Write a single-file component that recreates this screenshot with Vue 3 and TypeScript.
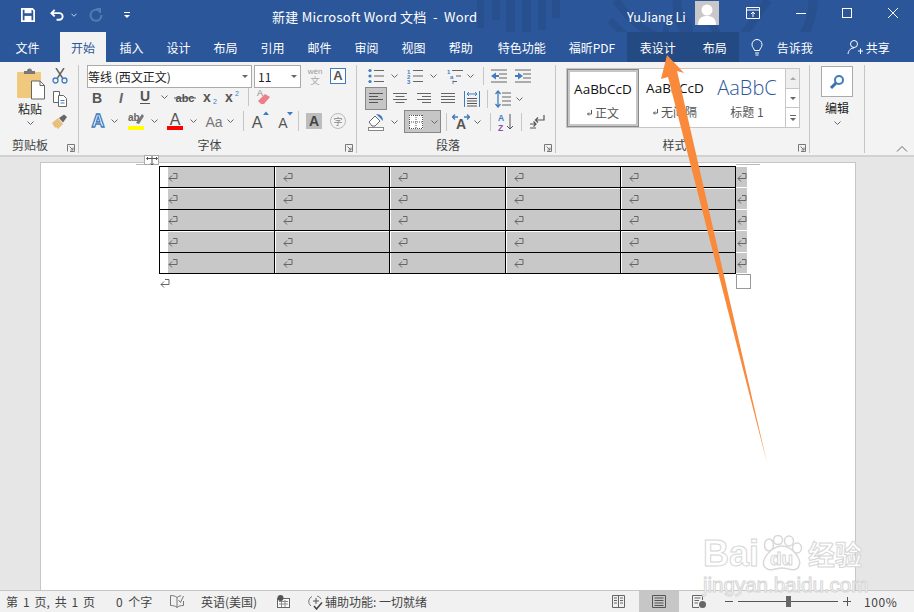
<script setup lang="ts">
const tabs = ['插入', '设计', '布局', '引用', '邮件', '审阅', '视图', '帮助', '特色功能', '福昕PDF']
const rows = [0, 1, 2, 3, 4]
const cols = [0, 1, 2, 3, 4]
</script>

<template>
  <div class="app">
    <svg width="0" height="0" class="defs">
      <symbol id="mark" viewBox="0 0 10 10">
        <path d="M5 1.500H9V6.500H1M4 3.500L1 6.500L4 9.500" fill="none" stroke="#666" stroke-width="1" />
      </symbol>
      <symbol id="caret" viewBox="0 0 7 4">
        <path d="M0.500 0.500L3.500 3.500L6.500 0.500" fill="none" stroke="#666" stroke-width="1" />
      </symbol>
    </svg>

    <header class="titlebar">
      <svg class="pattern" width="460" height="62" viewBox="454 0 460 62">
        <g fill="#28508f">
          <rect x="477" y="0" width="7" height="28" />
          <rect x="492" y="0" width="8" height="20" />
          <rect x="506" y="0" width="9" height="32" />
          <rect x="522" y="0" width="9" height="34" />
          <rect x="538" y="0" width="8" height="30" />
          <rect x="552" y="0" width="8" height="18" />
        </g>
        <g fill="none" stroke="#28508f">
          <circle cx="678" cy="30" r="12" stroke-width="6" />
          <path d="M616 0C640 40 700 60 740 40L768 0" stroke-width="8" />
          <circle cx="745" cy="0" r="68" stroke-width="9" />
          <path d="M610 20L650 62M700 10L740 62" stroke-width="7" />
        </g>
      </svg>
      <div class="qat">
        <svg class="q-save" width="14" height="14" viewBox="0 0 16 16">
          <path d="M1 1H13L15 3V15H1Z" fill="none" stroke="#fff" stroke-width="2" />
          <rect x="4" y="1" width="8" height="5" fill="#fff" />
          <rect x="4" y="9" width="8" height="6" fill="#fff" />
        </svg>
        <svg class="q-undo" width="15" height="14" viewBox="0 0 16 14">
          <path d="M2 5H10A3.500 3.500 0 0 1 10 12H7M5 1.500L1.500 5L5 8.500" fill="none" stroke="#fff" stroke-width="2" />
        </svg>
        <svg class="q-caret" width="6" height="4" viewBox="0 0 7 4"><path d="M0.500 0.500L3.500 3.500L6.500 0.500" fill="none" stroke="#dfe6f1" /></svg>
        <svg class="q-redo" width="14" height="14" viewBox="0 0 14 14">
          <path d="M10.500 3A5.500 5.500 0 1 0 12.500 7M7.500 1H11V5" fill="none" stroke="#557ab2" stroke-width="2" />
        </svg>
        <svg class="q-more" width="8" height="8" viewBox="0 0 8 8">
          <path d="M1 1.500H7" stroke="#fff" /><path d="M1 4L4 7L7 4Z" fill="#fff" />
        </svg>
      </div>
      <div class="doc-title">新建 Microsoft Word 文档&nbsp; -&nbsp; Word</div>
      <div class="user">YuJiang Li</div>
      <div class="avatar">
        <svg width="24" height="24" viewBox="0 0 24 24">
          <circle cx="12" cy="9" r="5.500" fill="#fff" />
          <path d="M3 24C3 17 7 15 12 15S21 17 21 24Z" fill="#fff" />
        </svg>
      </div>
      <div class="win-btns">
        <svg width="14" height="12" viewBox="0 0 14 12">
          <path d="M0.500 0.500H13.500V11.500H0.500ZM0.500 3H13.500M7 10V5M5 7L7 5L9 7" fill="none" stroke="#fff" />
        </svg>
        <svg width="10" height="10" viewBox="0 0 10 10"><path d="M0 5.500H10" stroke="#fff" /></svg>
        <svg width="10" height="10" viewBox="0 0 10 10"><rect x="0.500" y="0.500" width="9" height="9" fill="none" stroke="#fff" /></svg>
        <svg width="10" height="10" viewBox="0 0 10 10"><path d="M0 0L10 10M10 0L0 10" stroke="#fff" /></svg>
      </div>
    </header>

    <nav class="tabbar">
      <span class="tab file">文件</span>
      <span class="tab active">开始</span>
      <span v-for="t in tabs" :key="t" class="tab">{{ t }}</span>
      <div class="ctx-tabs">
        <span class="tab">表设计</span>
        <span class="tab">布局</span>
      </div>
      <svg class="bulb" width="12" height="17" viewBox="0 0 12 17">
        <path d="M3.500 11.500C3 9 1 8.500 1 5.500A5 5 0 0 1 11 5.500C11 8.500 9 9 8.500 11.500ZM4 14H8M4.500 16H7.500" fill="none" stroke="#fff" />
      </svg>
      <span class="tell">告诉我</span>
      <svg class="share-ic" width="16" height="16" viewBox="0 0 16 16">
        <circle cx="7" cy="5" r="3.500" fill="none" stroke="#fff" />
        <path d="M1 15C1.500 11 4 9 7 9M11 12H16M13.500 9.500V15" fill="none" stroke="#fff" />
      </svg>
      <span class="share">共享</span>
    </nav>

    <section class="ribbon">
      <div class="group g-clip">
        <div class="clip-body">
          <div class="paste">
            <svg width="29" height="32" viewBox="0 0 29 32">
              <rect x="1" y="4" width="24" height="26" rx="1" fill="#f0c97f" />
              <path d="M8 6V3H11A2 2 0 0 1 16 3H19V6Z" fill="#777" />
              <path d="M15.500 13H24L28.500 17.500V31H15.500Z" fill="#fff" stroke="#666" />
              <path d="M24 13V17.500H28.500" fill="none" stroke="#666" />
            </svg>
            <span class="paste-label">粘贴</span>
            <svg class="paste-caret" width="7" height="4"><use href="#caret" /></svg>
          </div>
          <div class="clip-tools">
            <svg width="16" height="16" viewBox="0 0 16 16">
              <path d="M4 0L10.500 10M12 0L5.500 10" stroke="#666" stroke-width="1.500" fill="none" />
              <circle cx="3.500" cy="12.500" r="2.500" fill="none" stroke="#3f7cbf" stroke-width="1.300" />
              <circle cx="12.500" cy="12.500" r="2.500" fill="none" stroke="#3f7cbf" stroke-width="1.300" />
            </svg>
            <svg width="16" height="16" viewBox="0 0 16 16">
              <path d="M1.500 0.500H7.500V11.500H1.500Z" fill="#fff" stroke="#666" />
              <path d="M6.500 4.500H11.500L14.500 7.500V15.500H6.500Z" fill="#fff" stroke="#666" />
              <path d="M8.500 9.500H12.500M8.500 12H12.500" stroke="#3f7cbf" />
            </svg>
            <svg width="16" height="16" viewBox="0 0 16 16">
              <path d="M0 9L6 4L11 10L6 15L4 13L3 14Z" fill="#e8c07c" />
              <path d="M7 4L12 0.500L15 3L11 8.500Z" fill="#666" />
            </svg>
          </div>
        </div>
        <div class="g-label clip-label">剪贴板</div>
        <svg class="launcher" width="8" height="8" viewBox="0 0 8 8"><path d="M0.500 7.500V0.500H7.500V7.500H3M2.500 2.500L6 6M6 3.500V6H3.500" fill="none" stroke="#777" /></svg>
      </div>

      <div class="group g-font">
        <div class="font-top">
          <div class="select font-name"><span>等线 (西文正文)</span><i class="tri"></i></div>
          <div class="select font-size"><span>11</span><i class="tri"></i></div>
          <svg class="wen" width="18" height="23" viewBox="0 0 18 23">
            <text x="9" y="7" text-anchor="middle" font-size="8" fill="#999" font-family="Liberation Sans">wén</text>
            <text x="9" y="17" text-anchor="middle" font-size="9.500" fill="#aaa" font-family="Noto Sans CJK SC">文</text>
          </svg>
          <div class="a-box">A</div>
        </div>
        <div class="fr r-f2">
          <svg width="14" height="16"><text x="7" y="14" class="tx bold" text-anchor="middle">B</text></svg>
          <svg width="14" height="16"><text x="7" y="14" class="tx ital" text-anchor="middle">I</text></svg>
          <svg width="14" height="18"><text x="7" y="13" class="tx bold" text-anchor="middle">U</text><path d="M2 15.500H12" stroke="#555" /></svg>
          <svg width="7" height="4"><use href="#caret" /></svg>
          <svg width="22" height="16"><text x="11" y="13" class="tx bold small" text-anchor="middle">abc</text><path d="M0 9H22" stroke="#555" /></svg>
          <svg width="16" height="18"><text x="1" y="14" class="tx bold">x</text><text x="11" y="16" font-size="7" fill="#3f7cbf" font-family="Liberation Sans">2</text></svg>
          <svg width="16" height="18"><text x="1" y="14" class="tx bold">x</text><text x="11" y="8" font-size="7" fill="#3f7cbf" font-family="Liberation Sans">2</text></svg>
          <i class="sep"></i>
          <svg width="16" height="18" viewBox="0 0 16 18">
            <text x="1" y="8" font-size="9" fill="#888" font-family="Liberation Sans">A</text>
            <path d="M2 13L9 6L14 9L8 16H5Z" fill="#ee7f8a" />
          </svg>
        </div>
        <div class="fr r-f3">
          <svg width="18" height="20"><text x="9" y="16" class="tx outline" text-anchor="middle">A</text></svg>
          <svg width="7" height="4"><use href="#caret" /></svg>
          <svg width="16" height="20" viewBox="0 0 16 20">
            <text x="0" y="10" font-size="10" font-weight="700" fill="#666" font-family="Liberation Sans">ab</text>
            <path d="M8 12L14 3L16 5L11 13Z" fill="#777" /><rect y="15" width="16" height="4" fill="#ff0" />
          </svg>
          <svg width="7" height="4"><use href="#caret" /></svg>
          <svg width="16" height="20"><text x="8" y="14" class="tx big" text-anchor="middle">A</text><rect y="15" width="16" height="4" fill="#f00" /></svg>
          <svg width="7" height="4"><use href="#caret" /></svg>
          <svg width="18" height="18"><text x="9" y="15" class="tx big lite" text-anchor="middle">Aa</text></svg>
          <svg width="7" height="4"><use href="#caret" /></svg>
          <i class="sep tall"></i>
          <svg width="18" height="20"><text x="6" y="17" class="tx big" text-anchor="middle">A</text><path d="M12 4H18L15 0.500Z" fill="#3f7cbf" /></svg>
          <svg width="16" height="20"><text x="6" y="17" class="tx mid" text-anchor="middle">A</text><path d="M10 1H16L13 4.500Z" fill="#3f7cbf" /></svg>
          <i class="sep tall"></i>
          <div class="shade-a">A</div>
          <svg width="16" height="16" viewBox="0 0 16 16">
            <circle cx="8" cy="8" r="7.500" fill="none" stroke="#b9b9b9" />
            <text x="8" y="11.500" text-anchor="middle" font-size="9" fill="#888" font-family="Noto Sans CJK SC">字</text>
          </svg>
        </div>
        <div class="g-label">字体</div>
        <svg class="launcher" width="8" height="8" viewBox="0 0 8 8"><path d="M0.500 7.500V0.500H7.500V7.500H3M2.500 2.500L6 6M6 3.500V6H3.500" fill="none" stroke="#777" /></svg>
      </div>

      <div class="group g-para">
        <div class="fr r-p1">
          <svg width="16" height="16" viewBox="0 0 16 16"><path d="M6 2.500H16M6 8H16M6 13.500H16" stroke="#666" /><circle cx="2" cy="2.500" r="1.600" fill="#3f7cbf" /><circle cx="2" cy="8" r="1.600" fill="#3f7cbf" /><circle cx="2" cy="13.500" r="1.600" fill="#3f7cbf" /></svg>
          <svg width="7" height="4"><use href="#caret" /></svg>
          <svg width="16" height="16" viewBox="0 0 16 16"><path d="M6 2.500H16M6 8H16M6 13.500H16" stroke="#666" /><text x="0" y="5.500" class="num">1</text><text x="0" y="11" class="num">2</text><text x="0" y="16" class="num">3</text></svg>
          <svg width="7" height="4"><use href="#caret" /></svg>
          <svg width="16" height="16" viewBox="0 0 16 16"><path d="M5 2.500H16M9 8H14M6 13.500H10" stroke="#666" /><text x="0" y="5.500" class="num">1</text><text x="3" y="11" class="num">a</text><text x="5" y="16" class="num">i</text></svg>
          <svg width="7" height="4"><use href="#caret" /></svg>
          <i class="sep"></i>
          <svg width="16" height="14" viewBox="0 0 16 14"><path d="M0 1H16M8 5H16M8 9H16M0 13H16" stroke="#666" /><path d="M0 7L5 3.500V10.500Z" fill="#3f7cbf" /><path d="M4 7H8" stroke="#3f7cbf" stroke-width="2" /></svg>
          <svg width="16" height="14" viewBox="0 0 16 14"><path d="M0 1H16M8 5H16M8 9H16M0 13H16" stroke="#666" /><path d="M8 7L3 3.500V10.500Z" fill="#3f7cbf" /><path d="M0 7H4" stroke="#3f7cbf" stroke-width="2" /></svg>
        </div>
        <div class="fr r-p2">
          <div class="on-box"><svg width="14" height="11" viewBox="0 0 14 11"><path d="M0 0.500H14M0 3.500H9M0 6.500H14M0 9.500H9" stroke="#555" /></svg></div>
          <svg width="14" height="11" viewBox="0 0 14 11"><path d="M0 0.500H14M2.500 3.500H11.500M0 6.500H14M2.500 9.500H11.500" stroke="#666" /></svg>
          <svg width="14" height="11" viewBox="0 0 14 11"><path d="M0 0.500H14M5 3.500H14M0 6.500H14M5 9.500H14" stroke="#666" /></svg>
          <svg width="14" height="11" viewBox="0 0 14 11"><path d="M0 0.500H14M0 3.500H14M0 6.500H14M0 9.500H14" stroke="#666" /></svg>
          <svg width="16" height="16" viewBox="0 0 16 16"><path d="M0.500 0V16M15.500 0V16" stroke="#3f7cbf" /><path d="M3 7.500H13M3 10H13M3 12.500H13M3 15H13" stroke="#555" /><path d="M3 3H13M5 1L3 3L5 5M11 1L13 3L11 5" fill="none" stroke="#3f7cbf" /></svg>
          <i class="sep"></i>
          <svg width="16" height="18" viewBox="0 0 16 18"><path d="M7 3H16M7 7H16M7 11H16M7 15H16" stroke="#666" /><path d="M3 1V17M0.500 4L3 1L5.500 4M0.500 14L3 17L5.500 14" fill="none" stroke="#3f7cbf" stroke-width="1.300" /></svg>
          <svg width="7" height="4"><use href="#caret" /></svg>
        </div>
        <div class="fr r-p3">
          <svg width="18" height="18" viewBox="0 0 18 18">
            <path d="M2 9L8 3L13 8L8 13H5Z" fill="#fff" stroke="#666" /><path d="M9 1C14 1 16 4 16 8L12 4Z" fill="#3f7cbf" />
            <rect x="1.500" y="14.500" width="15" height="3" fill="#fff" stroke="#888" />
          </svg>
          <svg width="7" height="4"><use href="#caret" /></svg>
          <div class="on-box wide">
            <svg width="14" height="14" viewBox="0 0 14 14"><rect width="14" height="14" fill="#fff" /><path d="M0.500 0V14M7 0V14M13.500 0V14M0 0.500H14M0 7H14M0 13.500H14" stroke="#555" stroke-dasharray="1 1" /></svg>
            <svg width="7" height="4"><use href="#caret" /></svg>
          </div>
          <i class="sep"></i>
          <svg width="18" height="18" viewBox="0 0 18 18">
            <text x="9" y="16" class="tx bold" text-anchor="middle">A</text>
            <path d="M0 4H6M3 1.500L0.500 4L3 6.500M12 4H18M15 1.500L17.500 4L15 6.500" fill="none" stroke="#3f7cbf" stroke-width="1.300" />
          </svg>
          <svg width="7" height="4"><use href="#caret" /></svg>
          <i class="sep"></i>
          <svg width="16" height="18" viewBox="0 0 16 18">
            <text x="0" y="8" font-size="8.500" font-weight="700" fill="#3f7cbf" font-family="Liberation Sans">A</text>
            <text x="0" y="17.500" font-size="8.500" font-weight="700" fill="#8a4fb0" font-family="Liberation Sans">Z</text>
            <path d="M12 1V16M9 13L12 16L15 13" fill="none" stroke="#555" />
          </svg>
          <i class="sep"></i>
          <svg width="16" height="16" viewBox="0 0 16 16"><path d="M15 1V6H7M9 3.500L6.500 6L9 8.500M1 10H7M4.500 7.500L7 10L4.500 12.500M1 14H7" fill="none" stroke="#555" stroke-width="1.200" /></svg>
        </div>
        <div class="g-label">段落</div>
        <svg class="launcher" width="8" height="8" viewBox="0 0 8 8"><path d="M0.500 7.500V0.500H7.500V7.500H3M2.500 2.500L6 6M6 3.500V6H3.500" fill="none" stroke="#777" /></svg>
      </div>

      <div class="group g-style">
        <div class="gallery">
          <div class="st-item selected">
            <span class="st-sample">AaBbCcD</span>
            <span class="st-name"><svg width="5" height="6" viewBox="0 0 5 6"><path d="M4.500 0V4H0.500M2 2.500L0.500 4L2 5.500" fill="none" stroke="#555" /></svg>正文</span>
          </div>
          <div class="st-item">
            <span class="st-sample">AaBbCcD</span>
            <span class="st-name"><svg width="5" height="6" viewBox="0 0 5 6"><path d="M4.500 0V4H0.500M2 2.500L0.500 4L2 5.500" fill="none" stroke="#555" /></svg>无间隔</span>
          </div>
          <div class="st-item">
            <span class="st-sample head">AaBbC</span>
            <span class="st-name">标题 1</span>
          </div>
          <div class="st-scroll">
            <div class="sc up"><i class="tri up-tri"></i></div>
            <div class="sc"><i class="tri"></i></div>
            <div class="sc more"><i class="bar"></i><i class="tri"></i></div>
          </div>
        </div>
        <div class="g-label">样式</div>
        <svg class="launcher" width="8" height="8" viewBox="0 0 8 8"><path d="M0.500 7.500V0.500H7.500V7.500H3M2.500 2.500L6 6M6 3.500V6H3.500" fill="none" stroke="#777" /></svg>
      </div>

      <div class="group g-edit">
        <div class="find-btn">
          <svg width="16" height="16" viewBox="0 0 16 16">
            <circle cx="10" cy="6" r="4" fill="#fff" stroke="#3f7cbf" stroke-width="2" />
            <path d="M7 9L2 14" stroke="#3f6ea8" stroke-width="3" />
          </svg>
        </div>
        <span class="edit-label">编辑</span>
        <svg class="edit-caret" width="7" height="4"><use href="#caret" /></svg>
      </div>
      <svg class="collapse" width="12" height="6" viewBox="0 0 12 6"><path d="M1 5.500L6 0.500L11 5.500" fill="none" stroke="#666" /></svg>
    </section>

    <main class="canvas">
      <div class="page">
        <table class="doc-table">
          <tbody>
            <tr v-for="r in rows" :key="r">
              <td v-for="c in cols" :key="c" :class="{ first: c === 0 }">
                <div class="shade"><svg class="ret" width="10" height="10"><use href="#mark" /></svg></div>
              </td>
              <td class="row-end"><svg class="ret-end" width="10" height="10"><use href="#mark" /></svg></td>
            </tr>
          </tbody>
        </table>
        <svg class="after" width="10" height="10"><use href="#mark" /></svg>

        <div class="crop crop-l"></div>
        <div class="crop crop-r"></div>
        <div class="move-handle">
          <svg width="12" height="9" viewBox="0 0 12 9"><path d="M6 0V9M0.500 2.500H11.500M2 1L0.500 2.500L2 4M10 1L11.500 2.500L10 4M4.500 7.500L6 9L7.500 7.500" fill="none" stroke="#555" /></svg>
        </div>
        <div class="size-handle"></div>
      </div>

      <div class="watermark">
        <div class="wm-top">
          <span class="wm-bai">Bai</span>
          <div class="wm-paw">
            <svg width="44" height="38" viewBox="0 0 44 38">
              <g fill="#fff" stroke="#d8d8d8" stroke-width="1.500">
                <ellipse cx="9" cy="10" rx="4.500" ry="6" />
                <ellipse cx="18" cy="5" rx="4.500" ry="4.500" />
                <ellipse cx="29" cy="6" rx="4.500" ry="5" />
                <ellipse cx="37" cy="13" rx="4.500" ry="5" />
                <path d="M22 11C32 11 42 24 39 31C36 38 28 33 22 33C16 33 8 38 4 31C1 24 12 11 22 11Z" />
              </g>
            </svg>
            <span class="wm-du">du</span>
          </div>
          <span class="wm-cn">经验</span>
        </div>
        <div class="wm-url">jingyan.baidu.com</div>
      </div>
    </main>

    <footer class="statusbar">
      <span class="s-page">第 1 页, 共 1 页</span>
      <span class="s-words">0 个字</span>
      <svg class="s-book" width="14" height="13" viewBox="0 0 14 13"><path d="M7 2.500C5.500 1 3 0.500 0.500 0.500V10.500C3 10.500 5.500 11 7 12.500V2.500M7 2.500C8 1.500 9.500 1 11 0.700M13.500 6V10.500C11 10.500 8.500 11 7 12.500M8.500 5L10.500 7.500L13.500 1" fill="none" stroke="#777" /></svg>
      <span class="s-lang">英语(美国)</span>
      <svg class="s-macro" width="13" height="13" viewBox="0 0 13 13"><rect x="0.500" y="3.500" width="12" height="9" fill="#fff" stroke="#666" /><path d="M2 6.500H11M2 9H11M4.500 5V12M8 5V12" stroke="#888" /><circle cx="3.500" cy="3" r="3" fill="#555" /></svg>
      <svg class="s-access" width="15" height="16" viewBox="0 0 15 16"><path d="M4 2.500A5.500 5.500 0 0 0 3 12M9 2A5.500 5.500 0 0 1 13 5" fill="none" stroke="#777" /><path d="M5 7H11M8 4V10" stroke="#555" /><path d="M6 12L8.500 15L14 8.500" fill="none" stroke="#444" stroke-width="1.500" /></svg>
      <span class="s-a11y">辅助功能: 一切就绪</span>
      <svg class="v-read" width="13" height="13" viewBox="0 0 13 13"><path d="M0.500 0.500H12.500V12.500H0.500ZM6.500 0.500V12.500M2 3H5M2 5.500H5M2 8H5M8 3H11M8 5.500H11M8 8H11" fill="none" stroke="#666" /></svg>
      <div class="v-print"><svg width="14" height="13" viewBox="0 0 14 13"><path d="M0.500 0.500H13.500V12.500H0.500ZM2.500 3H11.500M2.500 5.500H11.500M2.500 8H11.500M2.500 10.500H11.500" fill="none" stroke="#555" /></svg></div>
      <svg class="v-web" width="14" height="13" viewBox="0 0 14 13"><path d="M7 12.500H0.500V0.500H10.500V5M2.500 3H8.500M2.500 5.500H7M2.500 8H6" fill="none" stroke="#666" /><circle cx="10.500" cy="9.500" r="3.500" fill="#666" /></svg>
      <div class="zoom">
        <i class="z-sign"></i>
        <div class="z-track"><i class="z-thumb"></i></div>
        <i class="z-sign plus"></i>
      </div>
      <span class="s-zoom">100%</span>
    </footer>

    <svg class="arrow" width="914" height="612" viewBox="0 0 914 612">
      <path d="M667 55L684 73L677 71L767 463L668 77L661 79Z" fill="#f98a3b" />
    </svg>
  </div>
</template>

<style scoped>
.app {
  position: relative;
  display: flex;
  flex-direction: column;
  width: 914px;
  height: 612px;
  overflow: hidden;
  font-family: "Noto Sans CJK SC", sans-serif;
  font-size: 12px;
  color: #333;
  background: #e6e6e6;
}
.defs {
  position: absolute;
}
i {
  display: block;
}

/* title bar */
.titlebar {
  position: relative;
  display: flex;
  align-items: center;
  flex: none;
  height: 32px;
  background: #2b579a;
  color: #fff;
}
.pattern {
  position: absolute;
  top: 0;
  right: 0;
}
.qat {
  position: relative;
  display: flex;
  align-items: center;
  flex: none;
  width: 272px;
  margin-top: -3px;
  padding-left: 21px;
  box-sizing: border-box;
}
.q-undo { margin-left: 15px; }
.q-caret { margin-left: 6px; }
.q-redo { margin-left: 12px; }
.q-more { margin-left: 20px; }
.doc-title {
  position: relative;
  flex: none;
  width: 355px;
  font-size: 13px;
  letter-spacing: 0.25px;
  white-space: nowrap;
}
.user {
  position: relative;
  flex: none;
  width: 68px;
  font-size: 12.5px;
}
.avatar {
  position: relative;
  display: flex;
  flex: none;
  width: 24px;
  height: 24px;
  margin-top: -6px;
  background: #c8c8c8;
  overflow: hidden;
}
.win-btns {
  position: relative;
  display: flex;
  align-items: center;
  margin-left: 27px;
  margin-top: -6px;
  gap: 36px;
}

/* tabs */
.tabbar {
  position: relative;
  display: flex;
  align-items: stretch;
  flex: none;
  height: 30px;
  background: #2b579a;
  color: #fff;
}
.tabbar > svg {
  flex: none;
  align-self: center;
}
.tab {
  display: flex;
  align-items: center;
  justify-content: center;
  flex: none;
  padding: 0 11.5px;
  white-space: nowrap;
}
.tab.file {
  margin-left: 4px;
  margin-right: 9px;
}
.tab.active {
  width: 46px;
  margin-right: 2px;
  box-sizing: border-box;
  background: #f3f3f3;
  color: #2b579a;
}
.tab:nth-child(11) {
  margin-left: 2px;
}
.ctx-tabs {
  position: relative;
  display: flex;
  flex: none;
  box-sizing: border-box;
  width: 112px;
  background: #244a83;
}
.ctx-tabs .tab:first-child {
  padding-left: 13px;
}
.ctx-tabs .tab:last-child {
  padding-left: 15.5px;
}
.bulb { margin-left: 12px; }
.tell { align-self: center; flex: none; margin-left: 14px; }
.share-ic { margin-left: 34px; }
.share { align-self: center; flex: none; margin-left: 3px; }

/* ribbon */
.ribbon {
  position: relative;
  display: flex;
  flex: none;
  height: 95px;
  box-sizing: border-box;
  background: #f3f3f3;
  border-bottom: 2px solid #d2d2d2;
}
.group {
  position: relative;
  display: flex;
  flex-direction: column;
  flex: none;
  box-sizing: border-box;
  height: 88px;
  margin-top: 3px;
  border-right: 1px solid #c6c6c6;
}
.g-label {
  position: absolute;
  left: 0;
  right: 16px;
  bottom: -2px;
  height: 20px;
  line-height: 20px;
  text-align: center;
  color: #444;
}
.launcher {
  position: absolute;
  right: 3px;
  bottom: 1px;
}
.sep {
  width: 1px;
  height: 18px;
  background: #c6c6c6;
}
.sep.tall {
  height: 20px;
}
.tx {
  font-family: "Liberation Sans", sans-serif;
  font-size: 14px;
  fill: #555;
}
.tx.bold { font-weight: 700; }
.tx.small { font-size: 11px; }
.tx.ital { font-style: italic; font-weight: 700; fill: #666; }
.tx.big { font-size: 16px; }
.tx.mid { font-size: 14px; }
.tx.lite { fill: #777; font-size: 14px; }
.tx.outline {
  font-size: 18px;
  font-weight: 700;
  fill: #fff;
  stroke: #3f7cbf;
  stroke-width: 1.3;
}
.num {
  font-family: "Liberation Sans", sans-serif;
  font-size: 6px;
  font-weight: 700;
  fill: #3f7cbf;
}

.g-clip { width: 79px; }
.clip-body { display: flex; padding-left: 15px; }
.paste {
  display: flex;
  flex-direction: column;
  align-items: center;
  width: 30px;
  padding-top: 3px;
}
.paste-label {
  margin-top: 0;
  font-size: 12px;
  line-height: 18px;
  color: #222;
}
.paste-caret { margin-top: 3px; }
.clip-tools {
  display: flex;
  flex-direction: column;
  gap: 7px;
  margin-left: 7px;
  padding-top: 3px;
}
.clip-label {
  right: 18px;
}

.g-font { width: 278px; padding-left: 8px; }
.font-top { display: flex; align-items: flex-start; height: 23px; }
.select {
  display: flex;
  align-items: center;
  justify-content: space-between;
  box-sizing: border-box;
  height: 23px;
  padding: 0 3px 0 0;
  background: #fff;
  border: 1px solid #aaa;
  color: #222;
  white-space: nowrap;
}
.font-name { width: 165px; }
.font-size { width: 47px; margin-left: 2px; padding-left: 3px; }
.tri {
  width: 0;
  height: 0;
  border-left: 3px solid transparent;
  border-right: 3px solid transparent;
  border-top: 3px solid #666;
}
.up-tri {
  border-top: 0;
  border-bottom: 3px solid #aaa;
}
.wen { flex: none; margin-left: 5px; margin-top: 2px; }
.a-box {
  box-sizing: border-box;
  width: 16px;
  height: 16px;
  margin: 3px 0 0 6px;
  border: 1px solid #3f7cbf;
  background: #fff;
  font: 700 13px/14px "Liberation Sans", sans-serif;
  text-align: center;
  color: #555;
}
.fr {
  display: grid;
  align-items: center;
  justify-items: start;
  height: 22px;
}
.r-f2 {
  margin-top: -2px;
  margin-left: 3px;
  grid-template-columns: 24px 24px 23px 13px 28px 22px 24px 8px 16px;
}
.r-f3 {
  margin-top: 2px;
  margin-left: 2px;
  grid-template-columns: 22px 17px 23px 16px 23px 15px 22px 16px 8px 26px 21px 8px 24px 16px;
}
.shade-a {
  width: 16px;
  height: 16px;
  background: #bdbdbd;
  font: 700 14px/16px "Liberation Sans", sans-serif;
  text-align: center;
  color: #444;
}

.g-para { width: 199px; }
.g-para .fr { height: 23px; }
.g-para .r-p1 { margin-top: -1px; }
.r-p1 {
  margin-left: 11px;
  grid-template-columns: 23px 16px 23px 17px 20px 16px 8px 24px 16px;
}
.r-p2 {
  margin-left: 8px;
  grid-template-columns: 28px 24px 24px 23px 23px 8px 21px 7px;
}
.r-p3 {
  margin-left: 10px;
  grid-template-columns: 24px 13px 42px 6px 22px 16px 8px 23px 8px 16px;
}
.on-box {
  display: flex;
  align-items: center;
  justify-content: center;
  box-sizing: border-box;
  width: 22px;
  height: 23px;
  background: #c6c6c6;
  border: 1px solid #888;
}
.on-box.wide {
  justify-content: flex-start;
  gap: 8px;
  width: 37px;
  padding-left: 4px;
}

.g-style { width: 254px; padding: 3px 0 0 10px; }
.gallery {
  display: flex;
  box-sizing: border-box;
  width: 234px;
  height: 60px;
  background: #fff;
  border: 1px solid #c6c6c6;
}
.st-item {
  display: flex;
  flex-direction: column;
  align-items: center;
  flex: none;
  box-sizing: border-box;
  width: 72px;
  padding-top: 4px;
}
.st-item.selected {
  width: 72px;
  border: 3px solid #c6c6c6;
  outline: 1px solid #888;
  outline-offset: -1px;
  padding-top: 2px;
}
.st-sample {
  height: 30px;
  font: 400 13.5px/30px "Open Sans", sans-serif;
  color: #111;
  white-space: nowrap;
}
.st-sample.head {
  font-size: 20px;
  font-weight: 300;
  color: #2b579a;
}
.st-name {
  display: flex;
  align-items: center;
  gap: 3px;
  color: #555;
  line-height: 18px;
}
.st-scroll {
  display: flex;
  flex-direction: column;
  width: 14px;
  margin-left: 2px;
  border-left: 1px solid #c6c6c6;
}
.sc {
  display: flex;
  flex-direction: column;
  align-items: center;
  justify-content: center;
  gap: 2px;
  flex: 1;
  border-bottom: 1px solid #c6c6c6;
}
.sc:last-child { border-bottom: 0; }
.sc.up { background: #efefef; }
.bar { width: 6px; height: 1px; background: #666; }

.g-edit {
  width: 55px;
  align-items: center;
  padding-top: 1px;
}
.find-btn {
  display: flex;
  align-items: center;
  justify-content: center;
  box-sizing: border-box;
  width: 32px;
  height: 31px;
  background: #fff;
  border: 1px solid #aaa;
}
.edit-label {
  margin-top: 2px;
  line-height: 18px;
  color: #222;
}
.edit-caret { margin-top: 4px; }
.collapse {
  position: absolute;
  right: 6px;
  bottom: 3px;
}

/* document */
.canvas {
  position: relative;
  flex: 1;
  min-height: 0;
  padding-top: 5px;
  background: #e6e6e6;
}
.page {
  position: relative;
  box-sizing: border-box;
  width: 816px;
  height: 100%;
  margin-left: 40px;
  padding: 3px 0 0 118px;
  background: #fff;
  border: 1px solid #c6c6c6;
  border-bottom: 0;
}
.doc-table {
  border-collapse: collapse;
  table-layout: fixed;
}
.doc-table td {
  box-sizing: border-box;
  width: 115.2px;
  height: 21.45px;
  padding: 0;
  border: 1px solid #000;
}
.shade {
  display: flex;
  align-items: center;
  height: 20px;
  margin-left: 1px;
  padding-left: 7px;
  background: #c8c8c8;
}
.first .shade {
  margin-left: 8px;
  padding-left: 0;
}
.doc-table td.row-end {
  width: 9px;
  border: 0;
  border-bottom: 1px solid #fff;
  background: #c8c8c8;
  overflow: hidden;
}
.ret, .ret-end, .after { display: block; }
.ret-end { margin-left: 1px; }
.after { margin: 4px 0 0 1px; }
.crop {
  position: absolute;
  top: 1px;
  height: 1px;
  background: #bbb;
}
.crop-l { left: 95px; width: 23px; }
.crop-r { left: 695px; width: 24px; }
.move-handle {
  position: absolute;
  top: -8px;
  left: 103px;
  display: flex;
  align-items: center;
  justify-content: center;
  box-sizing: border-box;
  width: 15px;
  height: 10px;
  background: #fff;
  border: 1px solid #aaa;
}
.size-handle {
  position: absolute;
  top: 111px;
  left: 695px;
  box-sizing: border-box;
  width: 15px;
  height: 15px;
  background: #fff;
  border: 1px solid #999;
}

/* watermark */
.watermark {
  position: absolute;
  top: 378px;
  left: 703px;
  width: 165px;
}
.wm-top {
  display: flex;
  align-items: center;
  height: 38px;
}
.wm-bai, .wm-du, .wm-cn, .wm-url {
  color: #fff;
  -webkit-text-stroke: 1px #d6d6d6;
  white-space: nowrap;
}
.wm-bai {
  font: 700 36px/38px "Liberation Sans", sans-serif;
  width: 57px;
}
.wm-paw {
  position: relative;
  flex: none;
  width: 46px;
  height: 38px;
}
.wm-du {
  position: absolute;
  left: 10px;
  top: 13px;
  font: 700 19px/22px "Liberation Sans", sans-serif;
}
.wm-cn {
  font: 700 27px/38px "Noto Sans CJK SC", sans-serif;
  margin-left: 2px;
}
.wm-url {
  font: 400 20.5px/22px "Liberation Sans", sans-serif;
  margin-top: 1px;
}

/* status bar */
.statusbar {
  display: flex;
  align-items: center;
  flex: none;
  height: 22px;
  box-sizing: border-box;
  background: #f1f1f1;
  border-top: 1px solid #c6c6c6;
  color: #444;
  white-space: nowrap;
}
.s-page { margin-left: 6px; width: 110px; word-spacing: 2.2px; }
.s-words { width: 54px; word-spacing: 3px; }
.s-book { flex: none; margin-right: 17px; }
.s-lang { width: 76px; }
.s-macro { flex: none; margin-right: 18px; }
.s-access { flex: none; margin-right: 2px; }
.s-a11y { width: 287px; }
.v-read { flex: none; }
.v-print {
  display: flex;
  align-items: center;
  justify-content: center;
  flex: none;
  width: 40px;
  height: 21px;
  margin-left: 14px;
  background: #c6c6c6;
}
.v-web { flex: none; margin-left: 13px; }
.zoom {
  display: flex;
  align-items: center;
  flex: none;
  margin-left: 19px;
}
.z-sign {
  position: relative;
  width: 8px;
  height: 1px;
  background: #555;
}
.z-sign.plus::after {
  content: "";
  position: absolute;
  left: 3.5px;
  top: -4px;
  width: 1px;
  height: 9px;
  background: #555;
}
.z-track {
  position: relative;
  width: 100px;
  height: 1px;
  margin: 0 5px;
  background: #555;
}
.z-thumb {
  position: absolute;
  left: 48px;
  top: -5px;
  width: 5px;
  height: 11px;
  background: #666;
}
.s-zoom {
  margin-left: 13px;
  letter-spacing: 0.6px;
}

.arrow {
  position: absolute;
  top: 0;
  left: 0;
  pointer-events: none;
}
</style>
